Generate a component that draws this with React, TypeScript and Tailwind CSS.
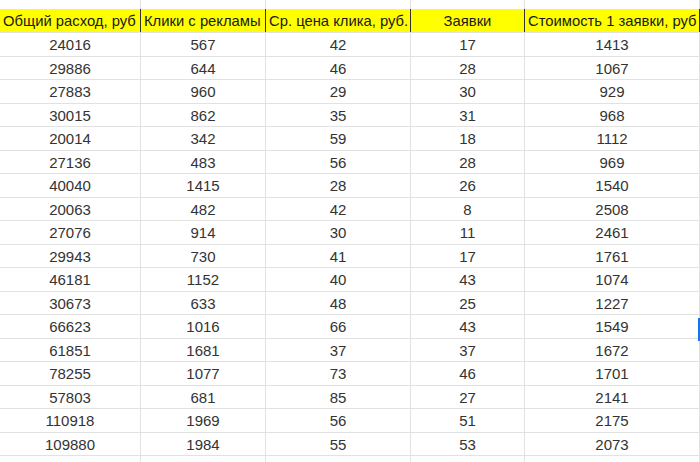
import React from "react"

const headers = [
  { label: "Общий расход, руб", align: "text-left" },
  { label: "Клики с рекламы", align: "text-left" },
  { label: "Ср. цена клика, руб.", align: "text-left" },
  { label: "Заявки", align: "text-center" },
  { label: "Стоимость 1 заявки, руб", align: "text-left" },
]

const rows: number[][] = [
  [24016, 567, 42, 17, 1413],
  [29886, 644, 46, 28, 1067],
  [27883, 960, 29, 30, 929],
  [30015, 862, 35, 31, 968],
  [20014, 342, 59, 18, 1112],
  [27136, 483, 56, 28, 969],
  [40040, 1415, 28, 26, 1540],
  [20063, 482, 42, 8, 2508],
  [27076, 914, 30, 11, 2461],
  [29943, 730, 41, 17, 1761],
  [46181, 1152, 40, 43, 1074],
  [30673, 633, 48, 25, 1227],
  [66623, 1016, 66, 43, 1549],
  [61851, 1681, 37, 37, 1672],
  [78255, 1077, 73, 46, 1701],
  [57803, 681, 85, 27, 2141],
  [110918, 1969, 56, 51, 2175],
  [109880, 1984, 55, 53, 2073],
]

const cols = "grid grid-cols-[141px_125px_145px_114px_175px]"

export default function App() {
  return (
    <div className="relative w-[700px] h-[462px] overflow-hidden bg-white font-['Liberation_Sans',Arial,sans-serif]">
      {/* top strip with gridlines */}
      <div className={`${cols} h-[9px]`}>
        {headers.map((h, i) => (
          <div key={i} className="border-r border-[#e2e2e2]" />
        ))}
      </div>

      {/* header */}
      <div className={`${cols} h-[24px] bg-[#ffff00] border-b border-[#e2e2e2]`}>
        {headers.map((h, i) => (
          <div
            key={i}
            className={`border-r border-[#333333] px-[3px] text-[14.8px] leading-[24px] text-[#1a1a1a] whitespace-nowrap overflow-hidden ${h.align}`}
          >
            {h.label}
          </div>
        ))}
      </div>

      {/* data */}
      {rows.map((r, ri) => (
        <div key={ri} className={`${cols} h-[23.5px] border-b border-[#e2e2e2]`}>
          {r.map((v, ci) => (
            <div
              key={ci}
              className="border-r border-[#e2e2e2] text-center text-[15px] leading-[23px] text-[#333333]"
            >
              {v}
            </div>
          ))}
        </div>
      ))}
      <div className={`${cols} h-[10px]`}>
        {headers.map((h, i) => (
          <div key={i} className="border-r border-[#e2e2e2]" />
        ))}
      </div>

      {/* selected cell edge */}
      <div className="absolute right-0 top-[318px] w-[2px] h-[23px] bg-[#1a73e8]" />
    </div>
  )
}
